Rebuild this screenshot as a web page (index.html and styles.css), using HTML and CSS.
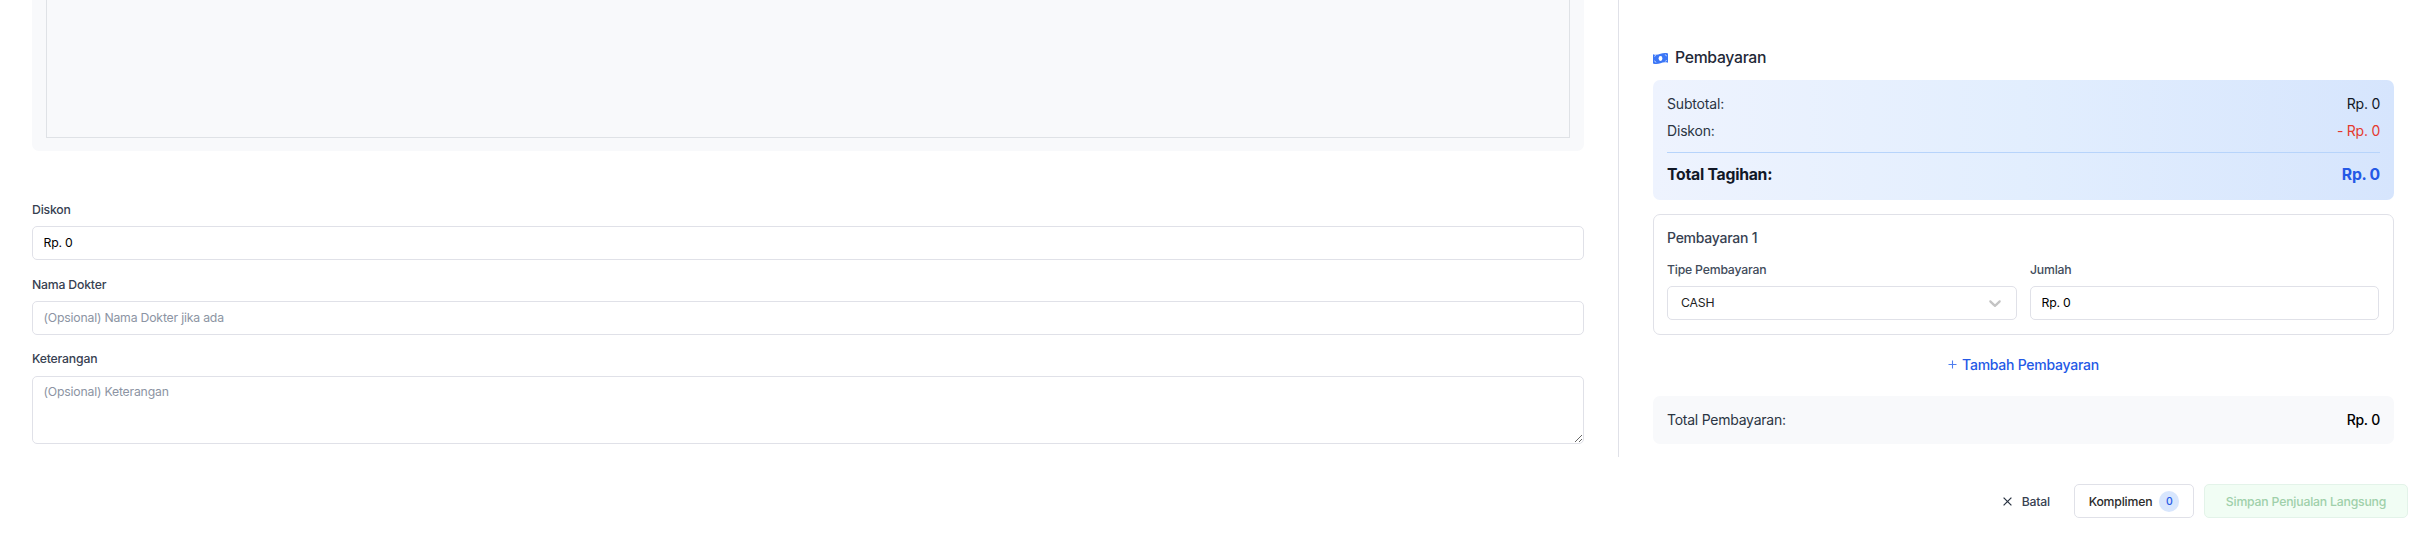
FILE: index.html
```
<!DOCTYPE html>
<html lang="id">
<head>
<meta charset="utf-8">
<title>Penjualan Langsung</title>
<link rel="stylesheet" href="styles.css">
</head>
<body>
<main class="content">
  <section class="details">
    <div class="items-panel"><div class="items-frame"></div></div>
    <div class="fields">
      <div class="field">
        <label class="label" for="diskon">Diskon</label>
        <input class="input" id="diskon" value="Rp. 0">
      </div>
      <div class="field">
        <label class="label" for="dokter">Nama Dokter</label>
        <input class="input" id="dokter" placeholder="(Opsional) Nama Dokter jika ada">
      </div>
      <div class="field">
        <label class="label raised" for="keterangan">Keterangan</label>
        <textarea class="input textarea" id="keterangan" placeholder="(Opsional) Keterangan"></textarea>
      </div>
    </div>
  </section>
  <section class="payment">
    <h2 class="heading">
      <svg class="money" viewBox="0 0 15 11"><path fill="#3b76f6" d="M0 1.2C3 2.200 5 1.600 7.500.7 10 0 12.500-.2 15 .5V9.800C12 8.900 10 9.400 7.500 10.200 5 11 2.500 11.200 0 10.400Z"/><ellipse cx="7.500" cy="5.500" rx="1.900" ry="2.400" fill="#fff"/><path fill="none" stroke="#dbe8ff" stroke-width=".8" d="M1.200 3.300Q2.600 3.300 2.700 2.200M1.200 7.900Q2.700 8.100 2.900 9.600M12.300 1.400Q12.400 2.800 13.800 2.900M12.300 8.600Q12.500 7.500 13.800 7.500"/></svg>
      Pembayaran
    </h2>
    <div class="summary">
      <div class="row"><span class="row-label">Subtotal:</span><span>Rp. 0</span></div>
      <div class="row"><span class="row-label">Diskon:</span><span class="discount">- Rp. 0</span></div>
      <div class="row grand"><span>Total Tagihan:</span><span class="grand-value">Rp. 0</span></div>
    </div>
    <div class="card">
      <h3 class="card-title">Pembayaran 1</h3>
      <div class="card-grid">
        <div class="field">
          <span class="label soft">Tipe Pembayaran</span>
          <div class="input select"><span>CASH</span>
            <svg class="chevron" viewBox="0 0 20 20"><path fill="#c4c4c4" d="M4.516 7.548c.436-.446 1.043-.481 1.576 0L10 11.295l3.908-3.747c.533-.481 1.141-.446 1.574 0 .436.445.408 1.197 0 1.615-.406.418-4.695 4.502-4.695 4.502a1.095 1.095 0 0 1-1.576 0S4.924 9.581 4.516 9.163s-.436-1.170 0-1.615z"/></svg>
          </div>
        </div>
        <div class="field">
          <label class="label soft" for="jumlah">Jumlah</label>
          <input class="input" id="jumlah" value="Rp. 0">
        </div>
      </div>
    </div>
    <button class="add"><svg class="plus" viewBox="0 0 9 9"><path d="M4.500 .5V8.500M.5 4.500H8.500"/></svg>Tambah Pembayaran</button>
    <div class="paid"><span class="paid-label">Total Pembayaran:</span><span class="paid-value">Rp. 0</span></div>
  </section>
</main>
<footer class="actions">
  <button class="btn cancel"><svg class="close" viewBox="0 0 9 9"><path d="M.6 .6 8.400 8.400M8.400 .6 .6 8.400"/></svg>Batal</button>
  <button class="btn compliment">Komplimen<span class="badge">0</span></button>
  <button class="btn save" disabled>Simpan Penjualan Langsung</button>
</footer>
</body>
</html>
```
FILE: styles.css
```
* { box-sizing: border-box; }
body { margin: 0; background: #fff; font-family: Inter, sans-serif; font-size: 14px; line-height: 20px; letter-spacing: -0.25px; color: #111827; }
h2, h3 { margin: 0; font-weight: 500; }
input, textarea, button { font-family: inherit; letter-spacing: inherit; margin: 0; }

.content { display: flex; height: 457px; }
.details { width: 1619px; padding: 0 34px 0 32px; border-right: 1px solid #e0e1e8; }
.items-panel { height: 151px; padding: 0 14px 13px; background: #f8f9fb; border-radius: 0 0 7px 7px; }
.items-frame { height: 138px; border: 1px solid #dfe2e6; border-top: 0; }
.fields { display: flex; flex-direction: column; gap: 14px; padding-top: 48px; }
.field { display: flex; flex-direction: column; gap: 6px; min-width: 0; }
.label { height: 21px; font-size: 12.25px; font-weight: 550; line-height: 22px; letter-spacing: -0.2px; color: #374151; }
.label.raised { line-height: 20px; }
.label.soft { font-weight: 500; color: #424c5b; }
.input { width: 100%; height: 34px; padding: 0 10.5px 1px; border: 1px solid #e0e1e8; border-radius: 5px; background: #fff; font-size: 12.25px; line-height: 17.5px; letter-spacing: -0.2px; color: #000; outline: 0; }
.input::placeholder { color: #8c94a3; opacity: 1; }
.textarea { display: block; height: 68px; padding-top: 6px; resize: vertical; }

.payment { width: 775px; padding: 47px 0 0 34px; }
.heading { display: flex; align-items: center; gap: 7px; height: 21px; margin-bottom: 12px; font-size: 15.75px; letter-spacing: -0.3px; color: #1f2937; }
.money { width: 15px; height: 11px; margin-top: 2px; }
.summary { height: 120px; padding: 14px; border-radius: 7px; background: linear-gradient(to right, #eef3fe, #e2eefe 50%, #d6e5fd); display: flex; flex-direction: column; gap: 7px; }
.row { display: flex; justify-content: space-between; }
.row-label { letter-spacing: -0.18px; color: #2b3543; }
.discount { color: #e5392e; }
.grand { margin-top: 4px; padding-top: 9px; border-top: 1px solid #b7d4fb; font-size: 15.75px; font-weight: 700; line-height: 25px; }
.grand-value { color: #2459e6; }
.card { height: 121px; margin-top: 14px; padding: 13px 14px 13px 13px; border: 1px solid #e0e1e8; border-radius: 7px; }
.card-title { font-size: 14px; line-height: 20px; color: #374151; margin-bottom: 11px; }
.card-grid { display: grid; grid-template-columns: 350px 1fr; gap: 13px; }
.select { display: flex; align-items: center; justify-content: space-between; padding: 0 11px 0 13px; color: #222; }
.chevron { width: 20px; height: 20px; }
.add { display: flex; align-items: center; justify-content: center; gap: 5px; width: 100%; height: 33px; margin: 13px 0 15px; padding: 0; border: 0; background: none; font-size: 14px; font-weight: 500; color: #2459e6; }
.plus { width: 9px; height: 9px; fill: none; stroke: #4f7eee; stroke-width: 1.1; }
.paid { display: flex; align-items: center; justify-content: space-between; height: 48px; padding: 0 14px; border-radius: 7px; background: #f8f9fb; }
.paid-label { color: #2b3543; }
.paid-value { font-weight: 500; color: #000; }

.actions { display: flex; justify-content: flex-end; padding: 27px 15px 0 0; }
.btn { display: flex; align-items: center; justify-content: center; height: 34px; padding: 0; border: 1px solid #e0e1e8; border-radius: 5px; background: #fff; font-size: 12.25px; font-weight: 500; letter-spacing: -0.2px; color: #2b2b2b; }
.cancel { gap: 10px; margin-right: 23px; border-color: transparent; color: #374151; }
.close { width: 9px; height: 9px; fill: none; stroke: #273140; stroke-width: 1.2; }
.compliment { width: 120px; gap: 7px; margin-right: 10px; }
.badge { width: 20px; height: 21px; border-radius: 10px; background: #d8e6fd; font-size: 10.5px; line-height: 21px; text-align: center; color: #2459e6; }
.save { width: 204px; background: #f1fdf4; border-color: #e3f3e9; color: #9fd0aa; }
```
